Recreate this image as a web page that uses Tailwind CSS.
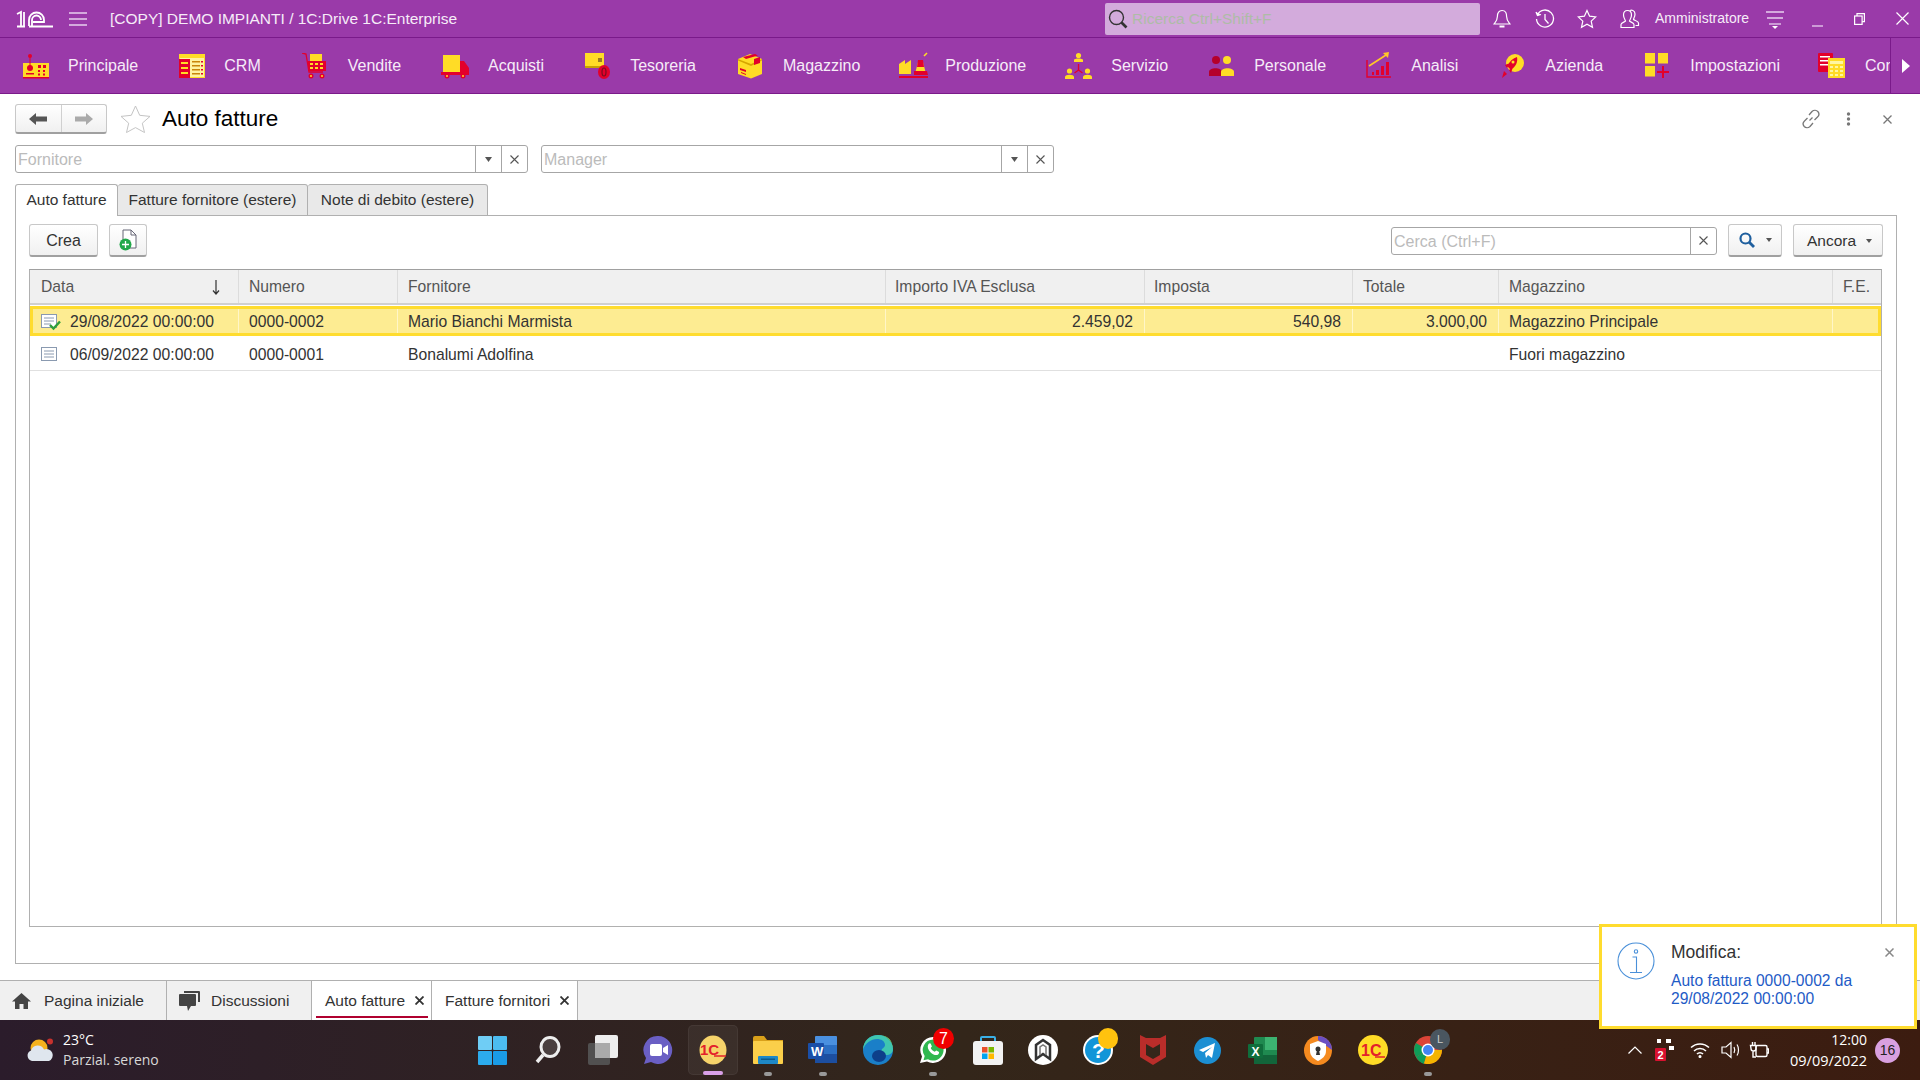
<!DOCTYPE html>
<html lang="it">
<head>
<meta charset="utf-8">
<title>Auto fatture</title>
<script src="https://cdn.jsdelivr.net/npm/@tailwindcss/browser@4"></script>
</head>
<body class="m-0 bg-white">
<div class="relative flex flex-col w-[1920px] h-[1080px] overflow-hidden bg-white text-[#333] text-base font-['Liberation_Sans',Arial,sans-serif]">

<!-- top bar -->
<header class="flex items-center h-[38px] shrink-0 bg-[#9a3aa9] border-b border-[#7a1a8a] text-white">
  <svg class="ml-[16px]" width="37" height="18" viewBox="0 0 37 18" fill="none" stroke="#fff" stroke-width="1.800"><path d="M1 4l4-2v14M8 2v14M1 16.500h8"/><path d="M13 16V10a7.500 7.500 0 0 1 15 0v2H17M16 16v-6a4.500 4.500 0 0 1 9 0M13 16.500h24"/></svg>
  <svg class="ml-[16px]" width="18" height="14" viewBox="0 0 18 14" stroke="#e8d0ee" stroke-width="1.400"><path d="M0 1h18M0 7h18M0 13h18"/></svg>
  <span class="ml-[23px] text-[15.5px] text-[#f6ecf8] w-[995px] whitespace-nowrap">[COPY] DEMO IMPIANTI / 1C:Drive 1C:Enterprise</span>
  <div class="flex items-center w-[375px] h-[32px] bg-[#d3abdc] rounded-[2px] pl-[3px]">
    <svg width="20" height="20" viewBox="0 0 20 20" fill="none" stroke="#333" stroke-width="1.400"><circle cx="8.500" cy="8.500" r="7"/><path d="M13.500 13.500l5 5" stroke-width="2.600"/></svg>
    <span class="ml-[4px] text-[15.5px] text-[#aebca6]">Ricerca Ctrl+Shift+F</span>
  </div>
  <svg class="ml-[13px]" width="18" height="20" viewBox="0 0 18 20" fill="none" stroke="#fff" stroke-width="1.200"><path d="M9 1.500c-3.600 0-4.600 3-4.600 6 0 4-2.400 6-3.400 7.500h16c-1-1.500-3.400-3.500-3.400-7.500 0-3-1-6-4.600-6z"/><path d="M6.500 17.500h5" stroke-width="2"/></svg>
  <svg class="ml-[24px]" width="20" height="20" viewBox="0 0 20 20" fill="none" stroke="#fff" stroke-width="1.300"><path d="M2.500 5.500A8.500 8.500 0 1 1 1.500 10"/><path d="M1 3l1.500 3.500L6 5.500" fill="#fff"/><path d="M10 5v5.500l3.500 4"/></svg>
  <svg class="ml-[22px]" width="20" height="20" viewBox="0 0 20 20" fill="none" stroke="#fff" stroke-width="1.200"><path d="M10 1.500l2.600 5.700 6.200.7-4.600 4.200 1.300 6.200L10 15.200l-5.500 3.100 1.300-6.200-4.600-4.200 6.200-.7z"/></svg>
  <svg class="ml-[22px]" width="21" height="20" viewBox="0 0 21 20" fill="none" stroke="#fff" stroke-width="1.200"><path d="M2 18.500v-3c0-1.500 3.500-2.500 4.500-3.500 0-1-2-2.500-2-6 0-3 1.500-4.500 4-4.500s4 1.500 4 4.500c0 3.500-2 5-2 6 1 1 4.500 2 4.500 3.500v3z"/><path d="M11 1.500c1-.5 5-.8 5 3.500 0 3-1.500 4-1.500 5.500 1 1 5 1.500 5 3.500v2.500h-3"/></svg>
  <span class="ml-[15px] text-[14px] text-[#f6ecf8] w-[104px]">Amministratore</span>
  <svg class="ml-[7px]" width="18" height="20" viewBox="0 0 18 20" fill="#e8d0ee" stroke="#e8d0ee"><path d="M0 3h18M1 9h16" stroke-width="1.300"/><path d="M3 15h12" stroke-width="1.300"/><path d="M6 17h6l-3 3z" stroke="none" fill="#fff"/></svg>
  <svg class="ml-[28px]" width="11" height="20" viewBox="0 0 11 20" stroke="#e8d0ee" stroke-width="1.300"><path d="M0 17h11"/></svg>
  <svg class="ml-[31px]" width="11" height="12" viewBox="0 0 11 12" fill="none" stroke="#fff" stroke-width="1.200"><rect x=".6" y="3" width="7.500" height="8.400"/><path d="M3 3V.7h7.400v8H8.200"/></svg>
  <svg class="ml-[31px]" width="13" height="13" viewBox="0 0 13 13" stroke="#fff" stroke-width="1.200"><path d="M.5.5l12 12M12.500.5l-12 12"/></svg>
</header>

<!-- section bar -->
<nav class="flex items-stretch h-[56px] shrink-0 bg-[#9a3aa9] border-b border-[#7a1a8a] text-[#f6ecf8]">
  <div class="flex flex-1 min-w-0 overflow-hidden pl-[3px] whitespace-nowrap">
    <div class="flex items-center shrink-0 pl-[20px] pr-[21px]"><span class="w-[45px]"><svg width="26" height="26" viewBox="0 0 26 26"><rect x="0" y="10" width="26" height="14" fill="#ffdc26"/><path d="M0 24h26v1.500H0z" fill="#e3002b"/><circle cx="7" cy="3" r="2" fill="#e3002b"/><path d="M6.500 4h1v9h-1z" fill="#e3002b"/><circle cx="7" cy="15" r="3" fill="#e3002b"/><rect x="3" y="20" width="8" height="1.500" fill="#e3002b"/><path fill="#e3002b" d="M15 12h3v3h-3zM20 12h3v3h-3zM15 17h2v2h-2zM20 17h2v2h-2zM15 20.500h2v2h-2zM20 20.500h2v2h-2z"/></svg></span><span>Principale</span></div>
    <div class="flex items-center shrink-0 pl-[20px] pr-[21px]"><span class="w-[45px]"><svg width="26" height="26" viewBox="0 0 26 26"><rect y="1" width="26" height="24" fill="#ffdc26"/><rect x="1" y="5" width="24" height="19" fill="#fff3a0"/><rect y="6" width="11" height="19" fill="#e3002b"/><path fill="#ffdc26" d="M2 9h7v2H2zM2 14h7v2H2zM2 19h7v2H2z"/><path fill="#c8860a" d="M13 8h8v1.500h-8zM13 12h8v1.500h-8zM13 16h8v1.500h-8zM13 20h8v1.500h-8z"/><path fill="#e3002b" d="M22 8h2v1.500h-2zM22 12h2v1.500h-2zM22 16h2v1.500h-2zM22 20h2v1.500h-2z"/></svg></span><span>CRM</span></div>
    <div class="flex items-center shrink-0 pl-[20px] pr-[21px]"><span class="w-[46px]"><svg width="24" height="26" viewBox="0 0 24 26"><rect x="8" y="1" width="12" height="7" fill="#ffdc26"/><path d="M0 0l4 1 3 18h14" fill="none" stroke="#e3002b" stroke-width="1.300"/><rect x="6" y="8" width="18" height="10" fill="#e3002b"/><path fill="#ffdc26" d="M8 10h3v2H8zM13 10h3v2h-3zM18 10h3v2h-3zM8 14h3v2H8zM13 14h3v2h-3zM18 14h3v2h-3z"/><circle cx="9" cy="23" r="2.500" fill="#e3002b"/><circle cx="20" cy="23" r="2.500" fill="#e3002b"/><circle cx="9" cy="23" r="1" fill="#ffdc26"/><circle cx="20" cy="23" r="1" fill="#ffdc26"/></svg></span><span>Vendite</span></div>
    <div class="flex items-center shrink-0 pl-[19px] pr-[21px]"><span class="w-[47px]"><svg width="29" height="26" viewBox="0 0 29 26"><rect x="2" y="2" width="17" height="17" fill="#ffdc26"/><path d="M0 19h2v3H0zM19 8h4l5 7v7H19z" fill="#e3002b"/><rect x="2" y="19" width="17" height="3" fill="#e3002b"/><circle cx="6" cy="23" r="2.500" fill="#e3002b"/><circle cx="22" cy="23" r="2.500" fill="#e3002b"/><circle cx="6" cy="23" r="1" fill="#ffdc26"/><circle cx="22" cy="23" r="1" fill="#ffdc26"/></svg></span><span>Acquisti</span></div>
    <div class="flex items-center shrink-0 pl-[20px] pr-[21px]"><span class="w-[45px]"><svg width="26" height="26" viewBox="0 0 26 26"><rect x="0" y="0" width="19" height="13" fill="#ffdc26"/><rect x="0" y="13" width="19" height="2" fill="#c9a200"/><rect x="13" y="5" width="4" height="4" fill="#9a7a20"/><ellipse cx="19" cy="19" rx="6" ry="7" fill="#e3002b"/><ellipse cx="19" cy="19" rx="2" ry="4" fill="none" stroke="#7a0a20" stroke-width="1.200"/></svg></span><span>Tesoreria</span></div>
    <div class="flex items-center shrink-0 pl-[21px] pr-[21px]"><span class="w-[45px]"><svg width="25" height="26" viewBox="0 0 25 26"><path d="M12 1l12 5v15l-11 4.500L0 21V6z" fill="#ffdc26"/><path d="M0 6l13 5 11-5v1.500L13 13 0 7.500z" fill="#d7a500"/><path d="M5 4l12-3 3 1.500L8 6zM16 6l6-2v6l-6 2z" fill="#e3002b"/><path d="M2 15l6 2v2l-6-2zM3 19l5 2v1l-5-2z" fill="#e3002b"/></svg></span><span>Magazzino</span></div>
    <div class="flex items-center shrink-0 pl-[18px] pr-[21px]"><span class="w-[46px]"><svg width="29" height="28" viewBox="0 0 29 28"><path d="M0 22V12l6-4v4l6-4v14z" fill="#ffdc26"/><path d="M16 22l3-12h5l3 12z" fill="#ffdc26"/><path d="M19 8h5l1 7h-7zM15 19h13l1 4H15z" fill="#e3002b"/><path d="M25 4l3-3" stroke="#ffdc26" stroke-width="1.600"/><rect y="24" width="29" height="2" fill="#e3002b"/></svg></span><span>Produzione</span></div>
    <div class="flex items-center shrink-0 pl-[18px] pr-[21px]"><span class="w-[46px]"><svg width="27" height="28" viewBox="0 0 27 28"><circle cx="13.500" cy="3.500" r="2.600" fill="#ffdc26"/><path d="M9 8c0-2 9-2 9 0v2H9z" fill="#ffdc26"/><circle cx="4.500" cy="19" r="2.600" fill="#ffdc26"/><path d="M0 25c0-3 9-3 9 0v2H0z" fill="#ffdc26"/><circle cx="22.500" cy="19" r="2.600" fill="#ffdc26"/><path d="M18 25c0-3 9-3 9 0v2h-9z" fill="#ffdc26"/><path d="M13.500 12v6M13.500 18l-4 3M13.500 18l4 3" stroke="#e3002b" stroke-width="1.300" fill="none"/></svg></span><span>Servizio</span></div>
    <div class="flex items-center shrink-0 pl-[20px] pr-[21px]"><span class="w-[45px]"><svg width="25" height="22" viewBox="0 0 25 22"><circle cx="7" cy="5" r="4" fill="#b5002b"/><path d="M0 21v-4c0-5 13-5 13 0v4z" fill="#b5002b"/><circle cx="18" cy="5" r="4" fill="#ffdc26"/><path d="M12 21v-4c0-5 13-5 13 0v4z" fill="#ffdc26"/></svg></span><span>Personale</span></div>
    <div class="flex items-center shrink-0 pl-[19px] pr-[21px]"><span class="w-[45px]"><svg width="25" height="27" viewBox="0 0 25 27" fill="none"><path d="M1 8v17h24" stroke="#e3002b" stroke-width="1.400"/><path d="M3 14L20 3" stroke="#ffc828" stroke-width="1.700"/><path d="M17 1l6-1-1 6z" fill="#ffc828"/><path fill="#e3002b" d="M6 20h2v3H6zM10 18h3v5h-3zM15 14h3v9h-3zM20 10h3v13h-3z"/></svg></span><span>Analisi</span></div>
    <div class="flex items-center shrink-0 pl-[21px] pr-[21px]"><span class="w-[45px]"><svg width="24" height="26" viewBox="0 0 24 26"><circle cx="15" cy="10" r="9" fill="#ffdc26"/><path d="M17 4c1 5-1 9-6 13l-4-4c3-5 6-8 10-9zM5 12l5-2-3 5zM9 17l4-3-2 6z" fill="#e3002b"/><path d="M4 18l3 3-5 4z" fill="#e3002b"/><circle cx="13" cy="9" r="1.500" fill="#ffdc26"/></svg></span><span>Azienda</span></div>
    <div class="flex items-center shrink-0 pl-[21px] pr-[21px]"><span class="w-[45px]"><svg width="24" height="25" viewBox="0 0 24 25"><rect width="10" height="10.500" fill="#ffdc26"/><rect x="13" width="10" height="10.500" fill="#ffdc26"/><rect y="13" width="10" height="10.500" fill="#ffdc26"/><path d="M17 13h2v5h5v2h-5v5h-2v-5h-5v-2h5z" fill="#e3002b"/></svg></span><span>Impostazioni</span></div>
    <div class="flex items-center shrink-0 pl-[17px] pr-[21px]"><span class="w-[47px]"><svg width="27" height="27" viewBox="0 0 27 27"><rect x="0" y="1" width="15" height="19" rx="1" fill="#e3002b"/><path fill="#fff" d="M2 4h10v1.500H2zM2 8h8v1.500H2zM2 12h8v1.500H2z"/><rect x="10" y="6" width="17" height="20" fill="#ffdc26"/><path fill="#fff6a0" d="M12 9h13v3H12zM12 14h3v2h-3zM17 14h3v2h-3zM22 14h3v2h-3zM12 18h3v2h-3zM17 18h3v2h-3zM22 18h3v2h-3zM12 22h3v2h-3zM17 22h3v2h-3zM22 22h3v2h-3z"/></svg></span><span>Contabilità</span></div>
  </div>
  <div class="flex items-center justify-center w-[30px] shrink-0 border-l border-[#7a1a8a]">
    <svg width="8" height="14" viewBox="0 0 8 14"><path d="M0 0l8 7-8 7z" fill="#fff"/></svg>
  </div>
</nav>

<!-- form head -->
<main class="flex-1 min-h-0 flex flex-col px-[15px] pt-[10px]">
  <div class="flex items-center h-[30px] shrink-0">
    <div class="flex w-[92px] h-[30px] rounded-[3px] border border-[#c8c8c8] border-b-[#a0a0a0] border-b-2 bg-gradient-to-b from-white to-[#f0f0f0]">
      <div class="flex-1 flex items-center justify-center border-r border-[#d0d0d0]"><svg width="18" height="12" viewBox="0 0 18 12"><path d="M0 6l7-6v3.500h11v5H7V12z" fill="#555"/></svg></div>
      <div class="flex-1 flex items-center justify-center"><svg width="18" height="12" viewBox="0 0 18 12"><path d="M18 6l-7-6v3.500H0v5h11V12z" fill="#aaa"/></svg></div>
    </div>
    <svg class="ml-[13px]" width="31" height="28" viewBox="0 0 31 28" fill="none" stroke="#c4c4c4" stroke-width="1"><path d="M15.500 1l4.200 9.300 10.300 1.100-7.700 6.800 2.200 9.300-9-4.900-9 4.900 2.200-9.300L1 11.400l10.300-1.100z"/></svg>
    <h1 class="ml-[11px] text-[22.500px] font-normal leading-none text-black">Auto fatture</h1>
    <div class="flex-1"></div>
    <svg width="20" height="20" viewBox="0 0 20 20" fill="none" stroke="#777" stroke-width="1.300"><path d="M8.500 11.500l3-3"/><path d="M8 6l3-3.500c2-1.800 4.500-1.300 5.800 0 1.300 1.500 1.500 3.800-.3 5.500l-3 3M12 14l-3 3.500c-2 1.800-4.500 1.300-5.800 0-1.300-1.500-1.500-3.800.3-5.500l3-3"/></svg>
    <svg class="ml-[25px]" width="5" height="14" viewBox="0 0 5 14" fill="#777"><circle cx="2.500" cy="2" r="1.700"/><circle cx="2.500" cy="7" r="1.700"/><circle cx="2.500" cy="12" r="1.700"/></svg>
    <svg class="ml-[32px] mr-[8px]" width="9" height="9" viewBox="0 0 9 9" stroke="#777" stroke-width="1.300"><path d="M.5.5l8 8M8.500.5l-8 8"/></svg>
    <div class="w-[5px]"></div>
  </div>

  <!-- filters -->
  <div class="flex gap-[13px] mt-[11px] shrink-0">
    <div class="flex w-[513px] h-[28px] border border-[#a6a6a6] rounded-[3px] bg-white">
      <span class="flex-1 pl-[2px] leading-[27px] text-[#bbb]">Fornitore</span>
      <span class="flex items-center justify-center w-[26px] border-l border-[#a6a6a6]"><svg width="7" height="5" viewBox="0 0 7 5"><path d="M0 0h7L3.500 5z" fill="#555"/></svg></span>
      <span class="flex items-center justify-center w-[26px] border-l border-[#a6a6a6]"><svg width="9" height="9" viewBox="0 0 9 9" stroke="#555" stroke-width="1.100"><path d="M.5.5l8 8M8.500.5l-8 8"/></svg></span>
    </div>
    <div class="flex w-[513px] h-[28px] border border-[#a6a6a6] rounded-[3px] bg-white">
      <span class="flex-1 pl-[2px] leading-[27px] text-[#bbb]">Manager</span>
      <span class="flex items-center justify-center w-[26px] border-l border-[#a6a6a6]"><svg width="7" height="5" viewBox="0 0 7 5"><path d="M0 0h7L3.500 5z" fill="#555"/></svg></span>
      <span class="flex items-center justify-center w-[26px] border-l border-[#a6a6a6]"><svg width="9" height="9" viewBox="0 0 9 9" stroke="#555" stroke-width="1.100"><path d="M.5.5l8 8M8.500.5l-8 8"/></svg></span>
    </div>
  </div>

  <!-- tabs -->
  <div class="flex h-[32px] mt-[11px] shrink-0 relative z-10 mb-[-1px] text-[15.500px]">
    <div class="w-[103px] text-center leading-[30px] bg-white border border-b-0 border-[#b0b0b0] rounded-t-[3px]">Auto fatture</div>
    <div class="w-[190px] text-center leading-[30px] bg-[#e9e9e9] border border-l-0 border-[#b0b0b0] rounded-t-[3px]">Fatture fornitore (estere)</div>
    <div class="w-[180px] text-center leading-[30px] bg-[#e9e9e9] border border-l-0 border-[#b0b0b0] rounded-t-[3px]">Note di debito (estere)</div>
  </div>

  <!-- tab panel -->
  <section class="flex flex-col w-[1882px] h-[749px] shrink-0 border border-[#b0b0b0] px-[13px] pt-[8px]">
    <div class="flex items-center h-[33px] shrink-0">
      <div class="flex items-center justify-center w-[69px] h-[33px] pt-[1px] rounded-[3px] border border-[#c8c8c8] border-b-2 border-b-[#a0a0a0] bg-gradient-to-b from-white to-[#f0f0f0]">Crea</div>
      <div class="flex items-center justify-center w-[38px] h-[33px] ml-[11px] rounded-[3px] border border-[#c8c8c8] border-b-2 border-b-[#a0a0a0] bg-gradient-to-b from-white to-[#f0f0f0]">
        <svg width="18" height="22" viewBox="0 0 18 22"><path d="M4 1h8l5 5v13H4z" fill="#fff" stroke="#667" stroke-width="1"/><path d="M12 1v5h5" fill="none" stroke="#667"/><circle cx="6.500" cy="15.500" r="6" fill="#22a84a"/><path d="M3 15.500h7M6.500 12v7" stroke="#fff" stroke-width="1.300"/></svg>
      </div>
      <div class="flex-1"></div>
      <div class="flex w-[326px] h-[28px] border border-[#a6a6a6] rounded-[3px] bg-white">
        <span class="flex-1 pl-[2px] leading-[27px] text-[#bbb]">Cerca (Ctrl+F)</span>
        <span class="flex items-center justify-center w-[26px] border-l border-[#a6a6a6]"><svg width="9" height="9" viewBox="0 0 9 9" stroke="#555" stroke-width="1.100"><path d="M.5.5l8 8M8.500.5l-8 8"/></svg></span>
      </div>
      <div class="flex items-center justify-center gap-[11px] w-[54px] h-[33px] ml-[11px] rounded-[3px] border border-[#c8c8c8] border-b-2 border-b-[#a0a0a0] bg-gradient-to-b from-white to-[#f0f0f0]">
        <svg width="16" height="16" viewBox="0 0 16 16" fill="none" stroke="#1f5f9e" stroke-width="2.200"><circle cx="6.500" cy="6.500" r="5"/><path d="M10 10l5 5" stroke-width="2.800"/></svg>
        <svg width="6" height="4" viewBox="0 0 6 4"><path d="M0 0h6L3 4z" fill="#555"/></svg>
      </div>
      <div class="flex items-center justify-center gap-[10px] w-[90px] h-[33px] ml-[11px] pl-[3px] pt-[1px] text-[15.500px] rounded-[3px] border border-[#c8c8c8] border-b-2 border-b-[#a0a0a0] bg-gradient-to-b from-white to-[#f0f0f0]">
        <span>Ancora</span>
        <svg width="6" height="4" viewBox="0 0 6 4"><path d="M0 0h6L3 4z" fill="#555"/></svg>
      </div>
    </div>

    <!-- table -->
    <div class="flex flex-col w-[1853px] h-[658px] mt-[12px] border border-[#b0b0b0] border-t-[#a0a0a0] text-[15.700px]">
      <div class="flex h-[35px] shrink-0 bg-[#f0f0f0] border-b-2 border-[#d0d0d0] leading-[33px] text-[#555]">
        <div class="relative w-[209px] pl-[11px] border-r border-[#dcdcdc]">Data<svg class="absolute right-[18px] top-[10px]" width="8" height="15" viewBox="0 0 8 15" fill="none" stroke="#333" stroke-width="1.200"><path d="M4 0v14M1 10.500l3 3.500 3-3.500"/></svg></div>
        <div class="w-[159px] pl-[10px] border-r border-[#dcdcdc]">Numero</div>
        <div class="w-[488px] pl-[10px] border-r border-[#dcdcdc]">Fornitore</div>
        <div class="w-[259px] pl-[9px] border-r border-[#dcdcdc]">Importo IVA Esclusa</div>
        <div class="w-[208px] pl-[9px] border-r border-[#dcdcdc]">Imposta</div>
        <div class="w-[146px] pl-[10px] border-r border-[#dcdcdc]">Totale</div>
        <div class="w-[334px] pl-[10px] border-r border-[#dcdcdc]">Magazzino</div>
        <div class="flex-1 pl-[10px]">F.E.</div>
      </div>
      <div class="flex h-[30px] shrink-0 mt-[1px] bg-[#fdec92] border-[3px] border-[#ffdc2e] leading-[26px] text-[#333]">
        <div class="flex items-center w-[206px] pl-[8px] pt-[2px] border-r border-[#fff6c8] whitespace-nowrap"><svg width="20" height="17" viewBox="0 0 20 17" fill="none"><rect x=".5" y=".5" width="15" height="13" fill="#fff" stroke="#8a9ab0"/><path d="M3 4h10M3 7h10M3 10h7" stroke="#8a9ab0"/><path d="M9 11l3.500 3.500L19 7.500" stroke="#2f9e3a" stroke-width="2.400"/></svg><span class="ml-[9px]">29/08/2022 00:00:00</span></div>
        <div class="w-[159px] pl-[10px] border-r border-[#fff6c8]">0000-0002</div>
        <div class="w-[488px] pl-[10px] border-r border-[#fff6c8]">Mario Bianchi Marmista</div>
        <div class="w-[259px] pr-[11px] text-right border-r border-[#fff6c8]">2.459,02</div>
        <div class="w-[208px] pr-[11px] text-right border-r border-[#fff6c8]">540,98</div>
        <div class="w-[146px] pr-[11px] text-right border-r border-[#fff6c8]">3.000,00</div>
        <div class="w-[334px] pl-[10px] border-r border-[#fff6c8]">Magazzino Principale</div>
        <div class="flex-1"></div>
      </div>
      <div class="flex h-[34px] shrink-0 mt-[1px] border-b border-[#e0e0e0] leading-[35px] text-[#333]">
        <div class="flex items-center w-[209px] pl-[11px] pt-[2px] whitespace-nowrap"><svg width="17" height="15" viewBox="0 0 17 15" fill="none"><rect x=".5" y=".5" width="15" height="13" fill="#fff" stroke="#8a9ab0"/><path d="M3 4h10M3 7h10M3 10h10" stroke="#8a9ab0"/></svg><span class="ml-[12px]">06/09/2022 00:00:00</span></div>
        <div class="w-[159px] pl-[10px]">0000-0001</div>
        <div class="w-[488px] pl-[10px]">Bonalumi Adolfina</div>
        <div class="w-[259px]"></div>
        <div class="w-[208px]"></div>
        <div class="w-[146px]"></div>
        <div class="w-[334px] pl-[10px]">Fuori magazzino</div>
      </div>
    </div>
  </section>
</main>

<!-- window tabs -->
<div class="flex h-[40px] shrink-0 bg-[#f0f0f0] border-t border-[#b0b0b0] leading-[38px] text-[15.500px]">
  <div class="flex items-center w-[167px] pl-[12px] border-r border-[#b0b0b0]"><svg width="19" height="16" viewBox="0 0 19 16"><path d="M9.500 0L19 8.500h-3V16h-4.500v-5h-4v5H3V8.500H0z" fill="#444"/></svg><span class="ml-[13px]">Pagina iniziale</span></div>
  <div class="flex items-center w-[145px] pl-[12px] border-r border-[#b0b0b0]"><svg width="21" height="20" viewBox="0 0 21 20"><path d="M5 0h15a1 1 0 0 1 1 1v10h-2V2H5z" fill="#444"/><path d="M1 3h15a1 1 0 0 1 1 1v10a1 1 0 0 1-1 1h-4l-3 5-1-5H1a1 1 0 0 1-1-1V4a1 1 0 0 1 1-1z" fill="#444"/></svg><span class="ml-[11px]">Discussioni</span></div>
  <div class="relative flex items-center w-[120px] pl-[13px] bg-white border-r border-[#b0b0b0]"><span>Auto fatture</span><svg class="ml-[10px]" width="9" height="9" viewBox="0 0 9 9" stroke="#333" stroke-width="1.800"><path d="M.5.5l8 8M8.500.5l-8 8"/></svg><span class="absolute left-[4px] right-[3px] bottom-[2px] h-[2px] bg-[#b0002f]"></span></div>
  <div class="flex items-center w-[146px] pl-[13px] bg-white border-r border-[#b0b0b0]"><span>Fatture fornitori</span><svg class="ml-[10px]" width="9" height="9" viewBox="0 0 9 9" stroke="#333" stroke-width="1.800"><path d="M.5.5l8 8M8.500.5l-8 8"/></svg></div>
</div>

<!-- taskbar -->
<footer class="flex items-center h-[60px] shrink-0 bg-gradient-to-r from-[#2b1c2b] via-[#33261a] to-[#3c1c10] text-white">
  <div class="flex items-center w-[465px] pl-[26px]">
    <svg width="29" height="24" viewBox="0 0 29 24"><circle cx="13" cy="10" r="8.500" fill="#f5b21d"/><circle cx="24" cy="3.500" r="3" fill="#c8322e"/><path d="M6 23a5.500 5.500 0 0 1-1-10.500 7 7 0 0 1 13-1 6 6 0 0 1 5 11.500z" fill="#dfe6ee"/></svg>
    <div class="ml-[8px] font-['Open_Sans',sans-serif] text-[14px] leading-[20px]">
      <div>23°C</div>
      <div class="text-[#d8d8d8]">Parzial. sereno</div>
    </div>
  </div>
  <div class="flex">
    <div class="flex items-center justify-center w-[55px] h-[60px]"><svg width="29" height="29" viewBox="0 0 29 29"><rect width="14" height="14" rx="1" fill="#6fcdf5"/><rect x="15" width="14" height="14" rx="1" fill="#4cbcf0"/><rect y="15" width="14" height="14" rx="1" fill="#2cabed"/><rect x="15" y="15" width="14" height="14" rx="1" fill="#1a9be6"/></svg></div>
    <div class="flex items-center justify-center w-[55px] h-[60px]"><svg width="26" height="28" viewBox="0 0 26 28" fill="#4a3f3f" stroke="#eee" stroke-width="3"><ellipse cx="15" cy="11" rx="9" ry="9.500"/><path d="M8 19l-6 7" stroke-width="3.500"/></svg></div>
    <div class="flex items-center justify-center w-[55px] h-[60px]"><svg width="30" height="30" viewBox="0 0 30 30"><rect x="7" y="0" width="23" height="23" rx="2" fill="#eee"/><rect x="0" y="8" width="22" height="22" rx="2" fill="#555" fill-opacity=".9"/><rect x="7" y="8" width="15" height="15" fill="#aaa"/></svg></div>
    <div class="flex items-center justify-center w-[55px] h-[60px]"><svg width="30" height="30" viewBox="0 0 30 30"><path d="M15 1a14 14 0 1 1-7 26L1 29l2-6A14 14 0 0 1 15 1z" fill="#6a5fc4"/><rect x="7" y="9" width="12" height="12" rx="2" fill="#fff"/><path d="M20 13l5-3v10l-5-3z" fill="#fff"/></svg></div>
    <div class="relative flex items-center justify-center w-[55px] h-[60px]">
      <span class="absolute left-[3px] top-[5px] w-[50px] h-[50px] rounded-[5px] bg-white/5 border border-white/5"></span>
      <svg class="relative" width="28" height="30" viewBox="0 0 28 30"><ellipse cx="14" cy="15" rx="13.500" ry="14.500" fill="#f6d36a"/><text x="1" y="20" font-size="15" font-weight="700" fill="#e3202b" font-family="Liberation Sans">1C</text><path d="M15 21h12" stroke="#e3202b" stroke-width="1.500"/></svg>
      <span class="absolute left-[18px] bottom-[5px] w-[20px] h-[4px] rounded-[2px] bg-[#d9a0e8]"></span>
    </div>
    <div class="relative flex items-center justify-center w-[55px] h-[60px]">
      <svg width="30" height="28" viewBox="0 0 30 28"><path d="M0 2a2 2 0 0 1 2-2h9l3 4h16v6H0z" fill="#d9a01a"/><rect y="5" width="30" height="23" rx="1" fill="#fbcf4a"/><rect x="5" y="20" width="20" height="8" rx="1" fill="#1e88c7"/><rect x="8" y="22.500" width="14" height="1.500" fill="#0f5a8a"/></svg>
      <span class="absolute left-[24px] bottom-[4px] w-[8px] h-[4px] rounded-[2px] bg-[#999]"></span>
    </div>
    <div class="relative flex items-center justify-center w-[55px] h-[60px]">
      <svg width="29" height="28" viewBox="0 0 29 28"><rect x="7" y="0" width="22" height="27" rx="1" fill="#4a90e0"/><rect x="7" y="9" width="22" height="9" fill="#2b6fc4"/><rect x="7" y="18" width="22" height="9" fill="#1c4ea0"/><rect x="0" y="7" width="16" height="16" rx="1" fill="#1a4fa8"/><text x="3" y="20" font-size="13" font-weight="700" fill="#fff" font-family="Liberation Sans">W</text></svg>
      <span class="absolute left-[24px] bottom-[4px] w-[8px] h-[4px] rounded-[2px] bg-[#999]"></span>
    </div>
    <div class="flex items-center justify-center w-[55px] h-[60px]"><svg width="30" height="30" viewBox="0 0 30 30"><circle cx="15" cy="15" r="15" fill="#1a7fc8"/><path d="M0 15C0 5 8 0 15 0c9 0 15 7 15 14 0 4-3 6-7 6-3 0-5-1-5-3 0-4 4-4 4-7 0-4-4-6-8-6C8 4 2 8 0 15z" fill="#3fc6b0"/><path d="M30 14c0-7-6-14-15-14 8 0 14 4 14 10 0 1 1 2 1 4z" fill="#7edb6a"/><ellipse cx="16" cy="21" rx="7" ry="6" fill="#0d3f8a"/></svg></div>
    <div class="relative flex items-center justify-center w-[55px] h-[60px]">
      <svg width="28" height="28" viewBox="0 0 28 28"><path d="M14 1a13 13 0 1 1-6 24.500L1 27l2-6.500A13 13 0 0 1 14 1z" fill="#fff"/><path d="M14 3.500a10.500 10.500 0 1 1-5 19.700l-4.500 1 1.200-4.200A10.500 10.500 0 0 1 14 3.500z" fill="#2fb84f"/><path d="M9.500 8c1-1 2-.8 2.400 0l1 2.400-1.200 1.600c.8 1.800 2.200 3 4 3.800l1.600-1.300 2.400 1.200c.6.500.5 1.600-.3 2.500-2 1.800-5 .6-7.500-1.500-3-2.800-4-6-2.400-8.700z" fill="#fff"/></svg>
      <span class="absolute right-[6px] top-[8px] flex items-center justify-center w-[21px] h-[21px] rounded-full bg-[#f00000] text-white text-[16px] leading-none">7</span>
      <span class="absolute left-[24px] bottom-[4px] w-[8px] h-[4px] rounded-[2px] bg-[#999]"></span>
    </div>
    <div class="flex items-center justify-center w-[55px] h-[60px]"><svg width="30" height="29" viewBox="0 0 30 29"><path d="M8 6V2a1 1 0 0 1 1-1h12a1 1 0 0 1 1 1v4" fill="none" stroke="#3ab0e6" stroke-width="2"/><rect y="5" width="30" height="24" rx="3" fill="#f2f2f2"/><rect x="9" y="11" width="5.500" height="5.500" fill="#e8502a"/><rect x="15.500" y="11" width="5.500" height="5.500" fill="#7bb800"/><rect x="9" y="17.500" width="5.500" height="5.500" fill="#00a4ef"/><rect x="15.500" y="17.500" width="5.500" height="5.500" fill="#ffb900"/></svg></div>
    <div class="flex items-center justify-center w-[55px] h-[60px]"><svg width="30" height="30" viewBox="0 0 30 30"><circle cx="15" cy="15" r="15" fill="#fff"/><path d="M8 24V10l7-5 7 5v14l-7-5z" fill="none" stroke="#333" stroke-width="2.500"/><path d="M12 20v-8l3-2 3 2v8" fill="none" stroke="#777" stroke-width="1.500"/></svg></div>
    <div class="relative flex items-center justify-center w-[55px] h-[60px]">
      <svg width="30" height="30" viewBox="0 0 30 30"><circle cx="15" cy="15" r="15" fill="#fff"/><circle cx="15" cy="15" r="13" fill="#1295d8"/><text x="9" y="23" font-size="21" font-weight="700" fill="#fff" font-family="Liberation Sans">?</text></svg>
      <span class="absolute right-[7px] top-[8px] w-[20px] h-[21px] rounded-full bg-[#ffc20e]"></span>
    </div>
    <div class="flex items-center justify-center w-[55px] h-[60px]"><svg width="26" height="30" viewBox="0 0 26 30"><path d="M0 0l6 3 7 0 7 0 6-3v22l-13 8L0 22z" fill="#b92d2a"/><path d="M6 9l7 4 7-4v11l-7 4-7-4z" fill="#33261a"/></svg></div>
    <div class="flex items-center justify-center w-[55px] h-[60px]"><svg width="27" height="27" viewBox="0 0 27 27"><circle cx="13.500" cy="13.500" r="13.500" fill="#1c8fd3"/><path d="M5 13l16-7-3 15-4-3-2 3-1-5 7-6-9 5z" fill="#fff"/></svg></div>
    <div class="flex items-center justify-center w-[55px] h-[60px]"><svg width="29" height="27" viewBox="0 0 29 27"><rect x="6" y="0" width="23" height="27" rx="1" fill="#1f8a50"/><rect x="17" y="0" width="12" height="13" fill="#3cb371"/><rect x="6" y="18" width="23" height="9" fill="#12653a"/><rect x="0" y="7" width="15" height="14" rx="1" fill="#0f6e3c"/><text x="3.500" y="18.500" font-size="12" font-weight="700" fill="#fff" font-family="Liberation Sans">X</text></svg></div>
    <div class="flex items-center justify-center w-[55px] h-[60px]"><svg width="28" height="29" viewBox="0 0 28 29"><ellipse cx="14" cy="14.500" rx="14" ry="14.500" fill="#f58a1f"/><path d="M14 0a14 14 0 0 1 14 14L14 4z" fill="#6a4fc4"/><path d="M14 5l8 3v7c0 5-4 8-8 10-4-2-8-5-8-10V8z" fill="#fff"/><circle cx="14" cy="13" r="2.500" fill="#333"/><path d="M13 14h2l1 5h-4z" fill="#333"/></svg></div>
    <div class="flex items-center justify-center w-[55px] h-[60px]"><svg width="30" height="30" viewBox="0 0 30 30"><circle cx="15" cy="15" r="15" fill="#ffdc26"/><text x="3" y="21" font-size="16" font-weight="700" fill="#e3202b" font-family="Liberation Sans">1C</text><path d="M17 22h10" stroke="#e3202b" stroke-width="1.500"/></svg></div>
    <div class="relative flex items-center justify-center w-[55px] h-[60px]">
      <svg width="28" height="28" viewBox="0 0 28 28"><circle cx="14" cy="14" r="14" fill="#db4437"/><path d="M14 14L2 21a14 14 0 0 1 0-14z" fill="#0f9d58"/><path d="M14 14l-4 14a14 14 0 0 1-8-7z" fill="#0f9d58"/><path d="M14 14h14a14 14 0 0 1-18 13.500z" fill="#f4b400"/><circle cx="14" cy="14" r="6.500" fill="#fff"/><circle cx="14" cy="14" r="5" fill="#4285f4"/></svg>
      <span class="absolute right-[5px] top-[9px] flex items-center justify-center w-[20px] h-[21px] rounded-full bg-[#4a5660] text-[#ccc] text-[11px] leading-none">L</span>
      <span class="absolute left-[24px] bottom-[4px] w-[8px] h-[4px] rounded-[2px] bg-[#999]"></span>
    </div>
  </div>
  <div class="flex flex-1 items-center min-w-0 pl-[173px]">
    <svg width="14" height="8" viewBox="0 0 14 8" fill="none" stroke="#fff" stroke-width="1.200"><path d="M.5 7.500L7 1l6.500 6.500"/></svg>
    <svg class="ml-[13px]" width="20" height="22" viewBox="0 0 20 22"><rect x="0" y="9" width="11" height="13" rx="1" fill="#d8112f"/><text x="2.500" y="20" font-size="11" font-weight="700" fill="#fff" font-family="Liberation Sans">2</text><path fill="#fff" d="M2 0h4v4H2zM11 0h5v4h-5zM14 7h5v4h-5z"/></svg>
    <svg class="ml-[15px]" width="20" height="16" viewBox="0 0 20 16" fill="none" stroke="#fff" stroke-width="1.500"><path d="M1 5.500a13 13 0 0 1 18 0M4 9a8.500 8.500 0 0 1 12 0M7 12a4 4 0 0 1 6 0"/><circle cx="10" cy="14.500" r=".8" fill="#fff"/></svg>
    <svg class="ml-[11px]" width="20" height="18" viewBox="0 0 20 18" fill="none" stroke="#fff" stroke-width="1.200"><path d="M1 6h4l5-4.500v15L5 12H1z"/><path d="M13 6c1 2 1 4 0 6M16 3.500c2 3 2 8 0 11"/></svg>
    <svg class="ml-[8px]" width="20" height="17" viewBox="0 0 20 17" fill="none" stroke="#fff" stroke-width="1.400"><rect x="7" y="3.500" width="11" height="11" rx="1.500"/><path d="M18 7h1.500v4H18M3.500 0v3M6 0v3M1.500 3.500H7v3a2.500 2.500 0 0 1-5 0zM4 9v6h3" /></svg>
    <div class="ml-[11px] w-[87px] text-right leading-[21px] text-[14px] font-['Open_Sans',sans-serif] whitespace-nowrap">
      <div>12:00</div>
      <div class="text-[14.500px]">09/09/2022</div>
    </div>
    <span class="ml-[8px] flex items-center justify-center w-[25px] h-[25px] rounded-full bg-[#d9a0e0] text-[#222] text-[14px]">16</span>
  </div>
</footer>

<!-- notification -->
<aside class="absolute left-[1599px] top-[924px] flex w-[318px] h-[105px] bg-white border-[3px] border-[#ffdc2e] pl-[15px]">
  <svg class="mt-[15px] shrink-0" width="38" height="38" viewBox="0 0 38 38" fill="none" stroke="#4a90d9" stroke-width="1.100"><circle cx="19" cy="19" r="18"/><circle cx="19" cy="9.500" r="1.700"/><path d="M15.500 15h4v15M13 30.500h12"/></svg>
  <div class="ml-[16px] flex-1 min-w-0">
    <div class="mt-[16px] leading-[18px] text-[17.500px] text-[#333]">Modifica:</div>
    <div class="mt-[11px] leading-[18px] text-[15.600px] text-[#1e5bc6]">Auto fattura 0000-0002 da<br>29/08/2022 00:00:00</div>
  </div>
  <svg class="mt-[21px] mr-[20px] shrink-0" width="9" height="9" viewBox="0 0 9 9" stroke="#888" stroke-width="1.500"><path d="M.5.5l8 8M8.500.5l-8 8"/></svg>
</aside>
</div>
</body>
</html>
